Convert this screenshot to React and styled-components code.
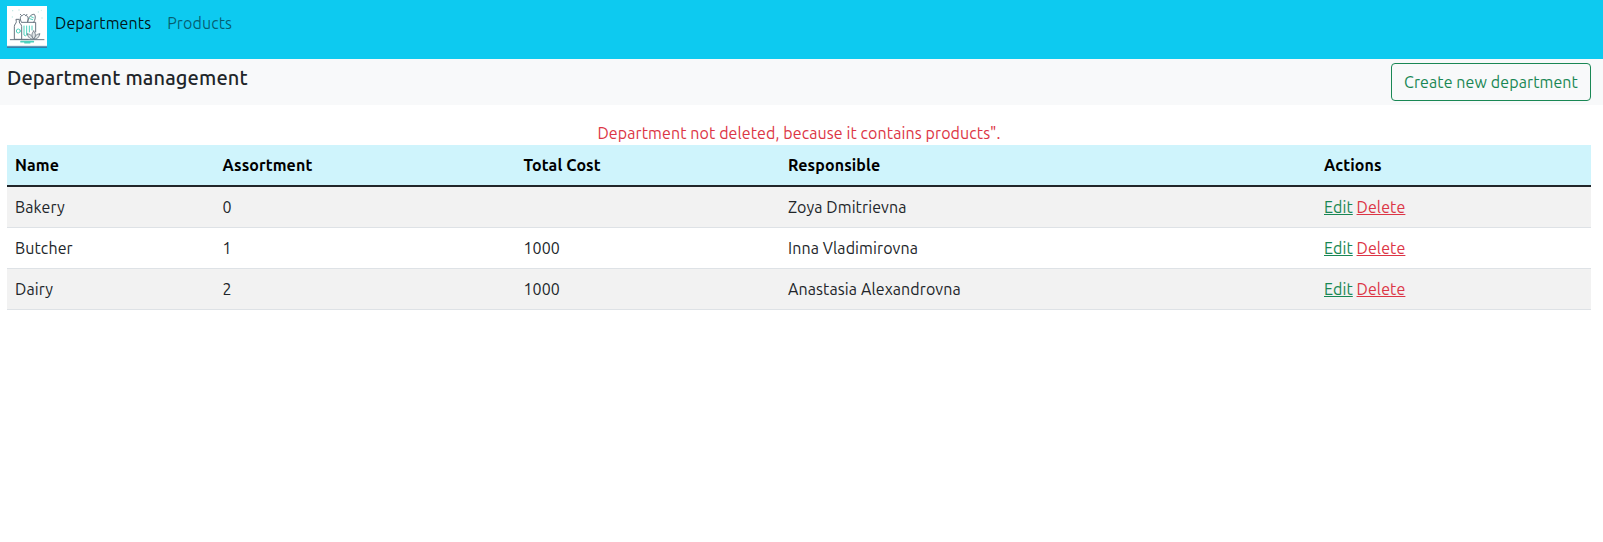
import React from "react";
import styled, { createGlobalStyle } from "styled-components";

const GlobalStyle = createGlobalStyle`
  *, *::before, *::after { box-sizing: border-box; }
  body {
    margin: 0;
    background: #fff;
    color: #212529;
    font: 400 16px/24px "Ubuntu", "Noto Sans", sans-serif;
    letter-spacing: 0.1px;
  }
`;

const Navbar = styled.nav`
  display: flex;
  align-items: flex-start;
  height: 59px;
  padding: 6px 7px;
  background: #0dcaf0;
`;

const Brand = styled.a`
  display: block;
  width: 40px;
  height: 42px;
  svg { display: block; }
`;

const NavLink = styled.a`
  padding: 5px 8px;
  color: ${(p) => (p.$active ? "rgba(0, 0, 0, 0.9)" : "rgba(0, 0, 0, 0.55)")};
  text-decoration: none;
`;

const TitleBar = styled.header`
  display: flex;
  justify-content: space-between;
  align-items: flex-start;
  height: 46px;
  padding: 4px 12px 4px 7px;
  background: #f8f9fa;
`;

const Title = styled.h1`
  margin: 3px 0 0;
  font-size: 20px;
  font-weight: 500;
  line-height: 24px;
  letter-spacing: 0.14px;
`;

const CreateButton = styled.button`
  width: 200px;
  height: 38px;
  padding: 6px 0;
  border: 1px solid #198754;
  border-radius: 4px;
  background: transparent;
  color: #198754;
  font: inherit;
  letter-spacing: inherit;
  white-space: nowrap;
`;

const Main = styled.main`
  padding: 16px 12px 0 7px;
`;

const Alert = styled.div`
  color: #dc3545;
  text-align: center;
`;

const Table = styled.table`
  width: 100%;
  table-layout: fixed;
  border-collapse: separate;
  border-spacing: 0;
`;

const Column = styled.col`
  width: ${(p) => p.$width}px;
`;

const HeadCell = styled.th`
  height: 42px;
  padding: 8px;
  border-bottom: 2px solid #212529;
  background: #cff4fc;
  color: #000;
  font-weight: 700;
  text-align: left;
`;

const Row = styled.tr`
  &:nth-child(odd) { background: #f2f2f2; }
`;

const Cell = styled.td`
  height: 41px;
  padding: 8px;
  border-bottom: 1px solid #dee2e6;
`;

const Action = styled.a`
  color: ${(p) => (p.$danger ? "#dc3545" : "#198754")};
  text-decoration: underline;
`;

function GroceryLogo() {
  return (
    <svg width="40" height="42" viewBox="0 0 120 126" fill="none" strokeLinejoin="round" strokeLinecap="round">
      <path fill="#fff" d="M0 0h120v126H0z" />
      <path fill="#9bb8c8" d="M0 119h120v2H0z" />
      <path fill="#397da5" d="M0 121h120v5H0z" />
      <g fill="#b9e6e0">
        <circle cx="17" cy="14" r="2" />
        <circle cx="36" cy="12" r="2" />
        <circle cx="16" cy="33" r="2" />
        <circle cx="94" cy="18" r="2" />
        <circle cx="105" cy="36" r="2" />
        <circle cx="103" cy="13" r="1.5" />
      </g>
      <path stroke="#4ed0bd" strokeWidth="5" d="M42 107h37M54 110h14" />
      <g stroke="#687580" strokeWidth="3">
        <path d="M10 101h101" />
        <path d="M28 40h9v8c0 5 7 6 7 14v38H22V62c0-8 6-9 6-14z" />
        <path d="M44 49h42v29M44 100h20" />
        <path d="M43 48c-5-8-4-20 4-20 3-5 8-2 9 1 7-1 9 7 6 19M43 28l-3-3M56 29l4-4" />
        <path d="M62 47c2-14 11-23 20-22 5 5 3 17-2 24" />
      </g>
      <g stroke="#687580" strokeWidth="2.5" fill="#dfe5e7">
        <path d="M61 84c7-1 12 3 19 15-10 1-17-4-19-15zM98 84c-7-1-12 3-18 15 10 1 16-4 18-15z" />
        <path d="M80 75c-7 8-7 16 0 24 7-8 7-16 0-24z" />
      </g>
      <g stroke="#4ed0bd" strokeWidth="3">
        <circle cx="34" cy="75" r="6" />
        <path d="M51 60v27q4 5 8 0V60M67 60v18M75 60v12" />
        <path d="M68 38l9 3M72 32l7 3" />
      </g>
    </svg>
  );
}

const columns = [
  { title: "Name", width: 207.5 },
  { title: "Assortment", width: 301 },
  { title: "Total Cost", width: 264.5 },
  { title: "Responsible", width: 536 },
  { title: "Actions", width: 275 },
];

const departments = [
  { name: "Bakery", assortment: 0, cost: "", person: "Zoya Dmitrievna" },
  { name: "Butcher", assortment: 1, cost: "1000", person: "Inna Vladimirovna" },
  { name: "Dairy", assortment: 2, cost: "1000", person: "Anastasia Alexandrovna" },
];

export default function App() {
  return (
    <>
      <GlobalStyle />
      <Navbar>
        <Brand><GroceryLogo /></Brand>
        <NavLink $active>Departments</NavLink>
        <NavLink>Products</NavLink>
      </Navbar>
      <TitleBar>
        <Title>Department management</Title>
        <CreateButton>Create new department</CreateButton>
      </TitleBar>
      <Main>
        <Alert>Department not deleted, because it contains products".</Alert>
        <Table>
          <colgroup>
            {columns.map((c) => <Column key={c.title} $width={c.width} />)}
          </colgroup>
          <thead>
            <tr>
              {columns.map((c) => <HeadCell key={c.title}>{c.title}</HeadCell>)}
            </tr>
          </thead>
          <tbody>
            {departments.map((d) => (
              <Row key={d.name}>
                <Cell>{d.name}</Cell>
                <Cell>{d.assortment}</Cell>
                <Cell>{d.cost}</Cell>
                <Cell>{d.person}</Cell>
                <Cell><Action>Edit</Action> <Action $danger>Delete</Action></Cell>
              </Row>
            ))}
          </tbody>
        </Table>
      </Main>
    </>
  );
}
